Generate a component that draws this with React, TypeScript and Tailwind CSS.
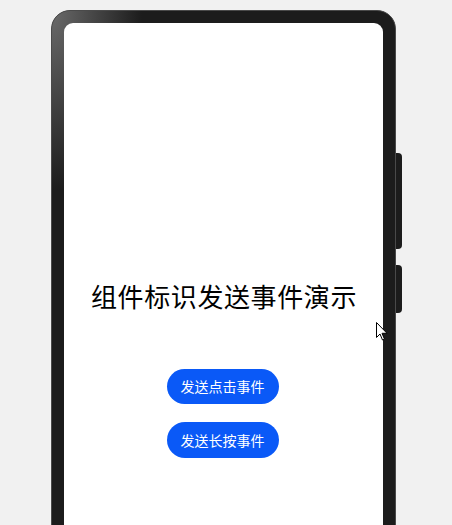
const Cursor = () => (
  <svg width="12" height="19" viewBox="0 0 12 19" className="absolute left-[376px] top-[322px]">
    <path d="M0.5 0.5 L0.5 15.5 L4 12 L6.5 18 L8.5 17.2 L6 11.3 L11 11.3 Z" fill="#fff" stroke="#000" strokeWidth="1" strokeLinejoin="miter" />
  </svg>
)

const App = () => {
  return (
    <div className="relative h-[525px] w-[452px] overflow-hidden bg-[#f1f1f1] font-['Noto_Sans_CJK_SC',sans-serif]">
      <div className="flex justify-center pt-[10px] pl-[1px]">
        <div className="h-[640px] w-[345px] rounded-[19px] border border-[#4a4a4a] bg-[#1c1c1c] bg-[radial-gradient(ellipse_90px_180px_at_0_0,#6a6a6a,#1c1c1c)] p-[12px]">
          <div className="flex h-full flex-col items-center rounded-[9px] bg-white pt-[256px]">
            <h1 className="pl-[1px] text-[26px] leading-[34px] text-black tracking-[0.6px]">组件标识发送事件演示</h1>
            <div className="mt-[56px] mr-[2px] flex flex-col items-center gap-[18px]">
              <button className="h-[35px] w-[112px] rounded-full bg-[#0a59f7] text-[14px] text-white">发送点击事件</button>
              <button className="h-[36px] w-[112px] rounded-full bg-[#0a59f7] text-[14px] text-white">发送长按事件</button>
            </div>
          </div>
        </div>
        <div className="flex flex-col pt-[143px]">
          <div className="h-[96px] w-[6px] rounded-r-[4px] bg-[#1c1c1c]" />
          <div className="mt-[16px] h-[48px] w-[6px] rounded-r-[4px] bg-[#1c1c1c]" />
        </div>
      </div>
      <Cursor />
    </div>
  )
}

export default App
